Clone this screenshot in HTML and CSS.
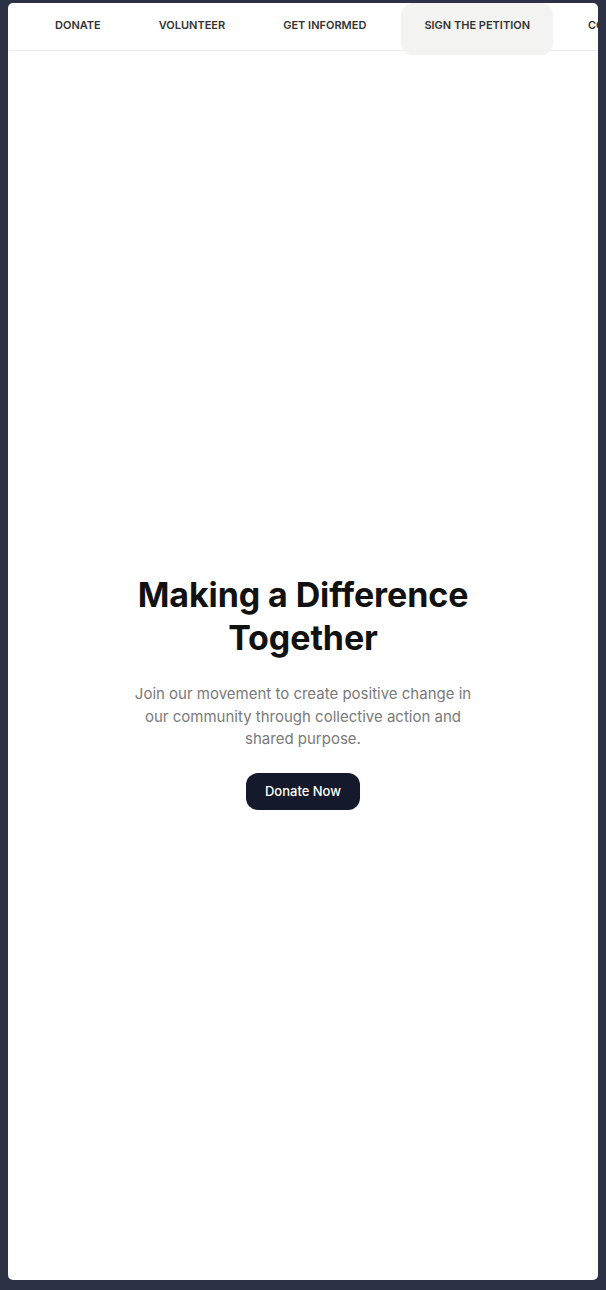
FILE: index.html
```html
<!DOCTYPE html>
<html lang="en">
<head>
<meta charset="utf-8">
<title>Making a Difference Together</title>
<link rel="stylesheet" href="styles.css">
</head>
<body>
<div class="card">
  <nav class="nav">
    <a class="nav-item" href="#">DONATE</a>
    <a class="nav-item" href="#">VOLUNTEER</a>
    <a class="nav-item" href="#">GET INFORMED</a>
    <a class="nav-item active" href="#">SIGN THE PETITION</a>
    <a class="nav-item" href="#">CONTACT</a>
  </nav>
  <main class="hero">
    <h1 class="title">Making a Difference Together</h1>
    <p class="lead">Join our movement to create positive change in our community through collective action and shared purpose.</p>
    <a class="btn" href="#">Donate Now</a>
  </main>
</div>
</body>
</html>
```

FILE: styles.css
```css
html, body {
  margin: 0;
  padding: 0;
}
body {
  background: #2c3146;
  padding: 3px 8px 10px 8px;
  font-family: Inter, "Liberation Sans", sans-serif;
}
.card {
  background: #ffffff;
  border-radius: 5px;
  height: 1277px;
  overflow: hidden;
  display: flex;
  flex-direction: column;
}
.nav {
  display: flex;
  gap: 12px;
  padding-left: 24px;
  height: 47px;
  border-bottom: 1px solid #efefef;
  flex-shrink: 0;
}
.nav-item {
  flex-shrink: 0;
  display: flex;
  align-items: center;
  justify-content: center;
  height: 52px;
  padding: 0 23px 8px;
  box-sizing: border-box;
  border-radius: 12px;
  white-space: nowrap;
  font-size: 11px;
  font-weight: 600;
  letter-spacing: 0;
  color: #333333;
  text-decoration: none;
  position: relative;
  z-index: 1;
}
.nav-item.active {
  background: #f3f3f2;
}
.hero {
  display: flex;
  flex-direction: column;
  align-items: center;
  text-align: center;
  padding-top: 522px;
}
.title {
  margin: 0;
  font-size: 34px;
  line-height: 43px;
  font-weight: 700;
  color: #111111;
  letter-spacing: -0.1px;
  max-width: 370px;
}
.lead {
  margin: 24px 0 0;
  max-width: 350px;
  font-size: 15px;
  line-height: 22.5px;
  color: #7a7a7a;
}
.btn {
  margin-top: 22px;
  display: inline-flex;
  align-items: center;
  justify-content: center;
  height: 37px;
  padding: 0 19px;
  box-sizing: border-box;
  border-radius: 12px;
  background: #141a2b;
  color: #ffffff;
  font-size: 13px;
  font-weight: 500;
  text-decoration: none;
}
```
